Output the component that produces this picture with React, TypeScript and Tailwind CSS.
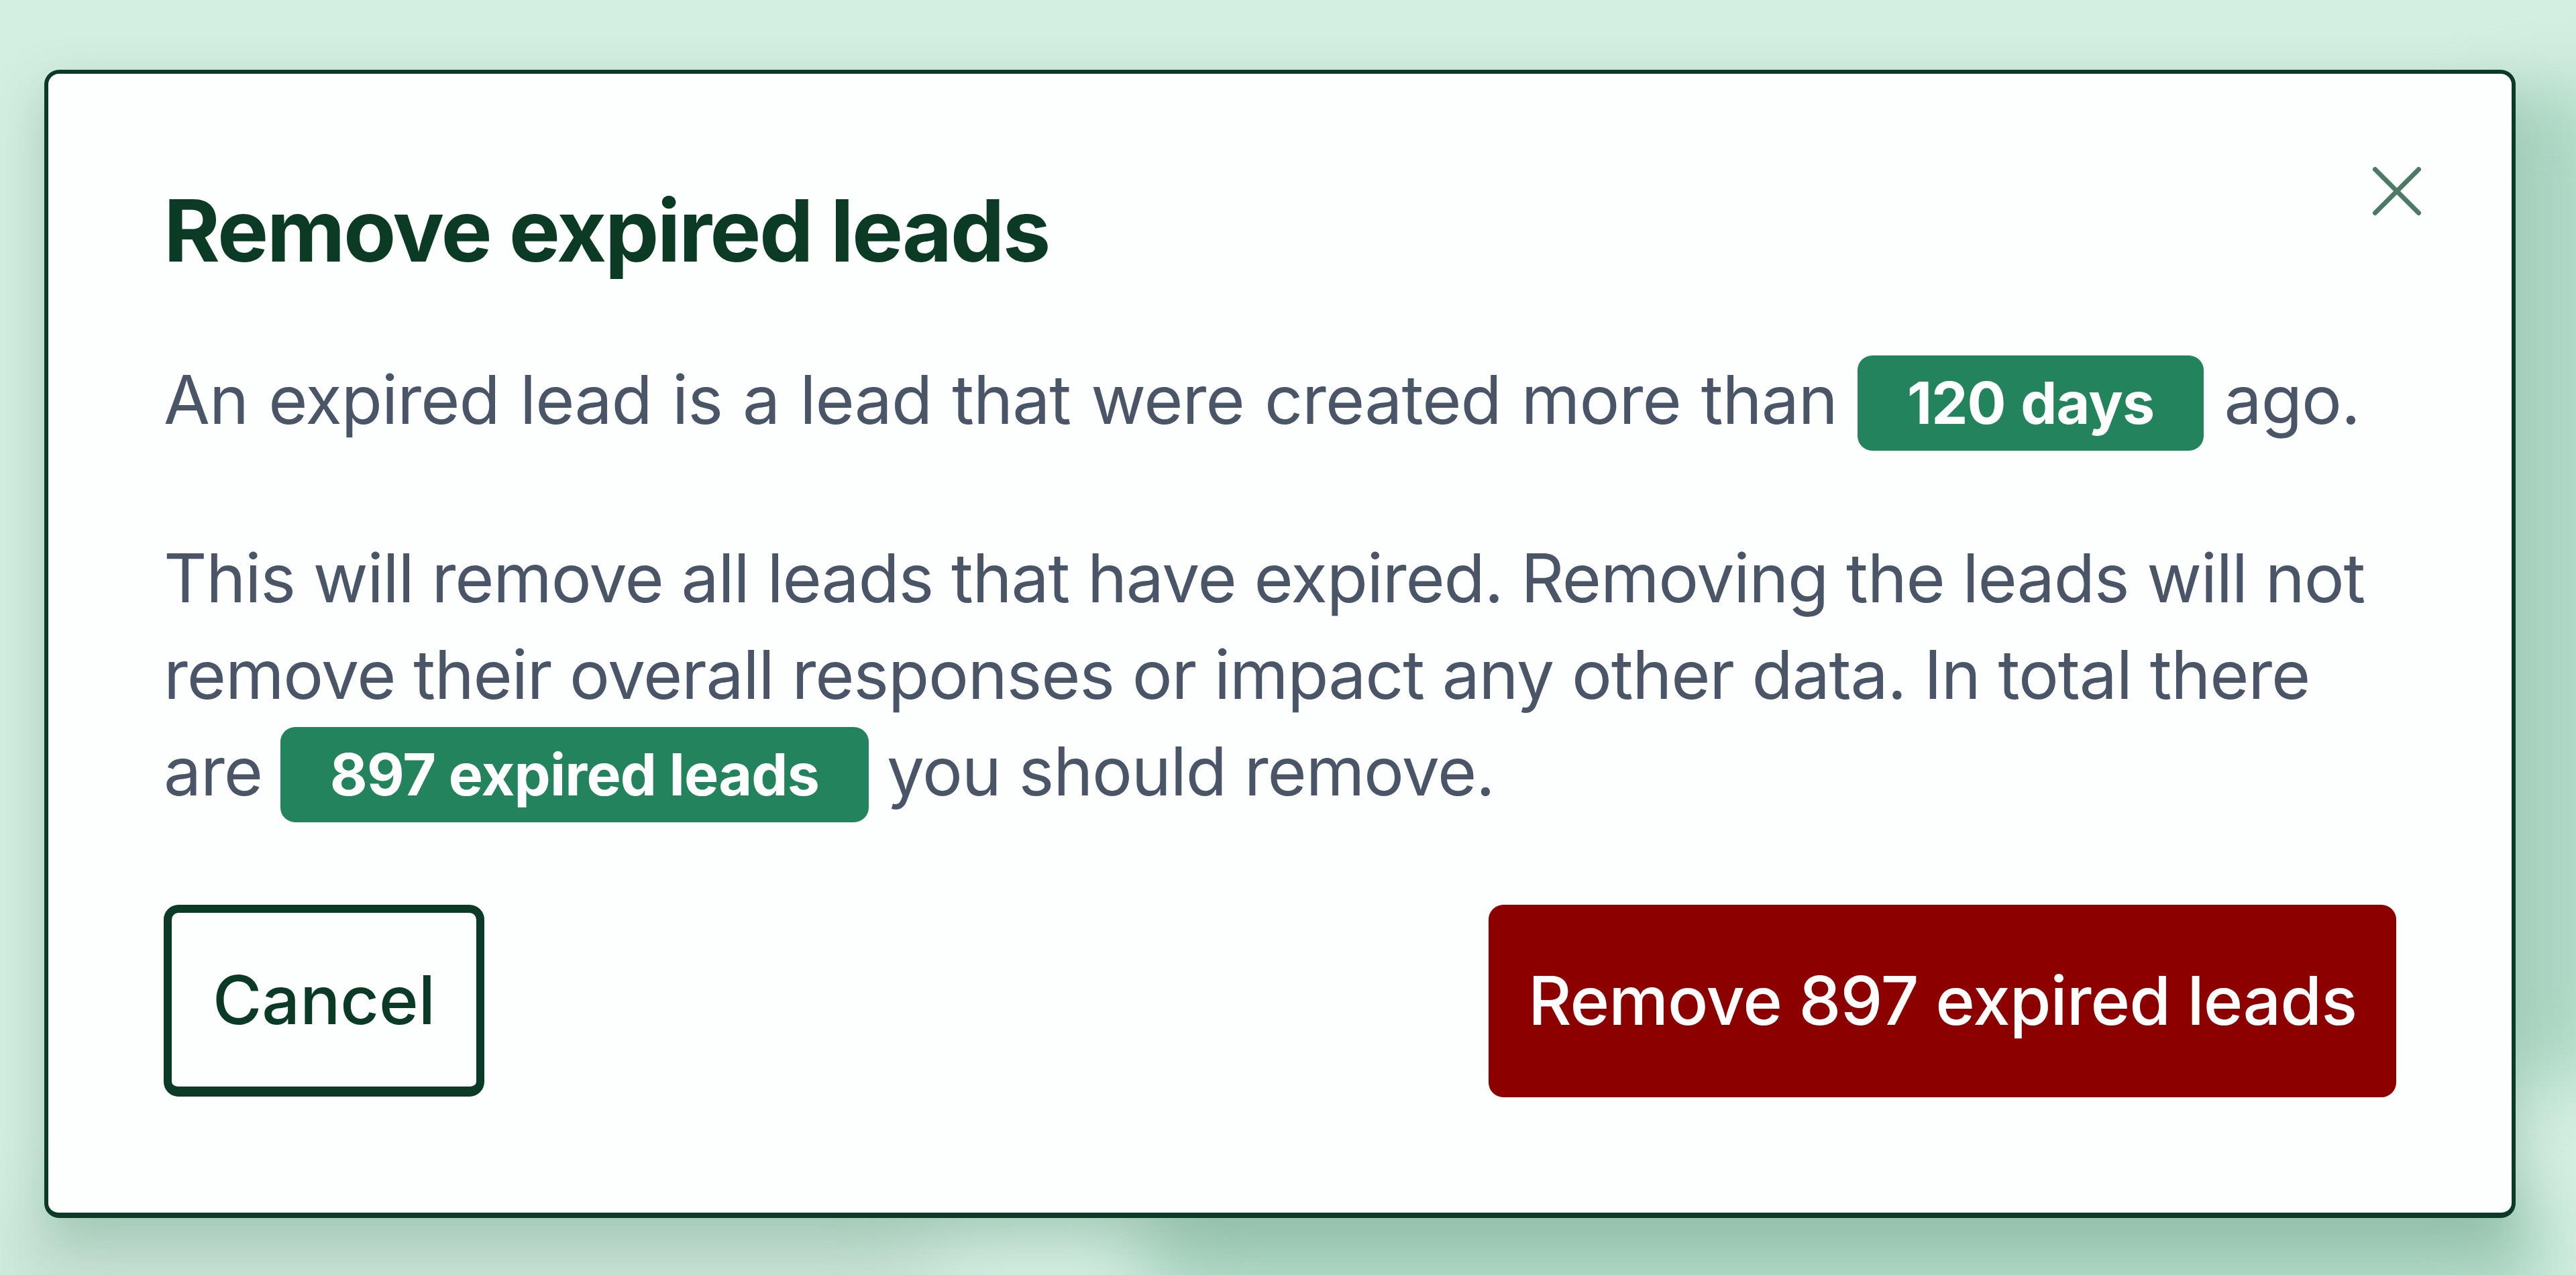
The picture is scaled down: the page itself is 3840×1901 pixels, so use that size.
import { X } from 'lucide-react'

function Pill({ children }: { children: React.ReactNode }) {
  return (
    <span className="inline-block rounded-[22px] bg-[#23835c] px-[74px] text-[86px] leading-[142px] font-bold tracking-[-0.01em] text-white">
      {children}
    </span>
  )
}

export default function App() {
  return (
    <div className="relative flex min-h-screen w-full items-center justify-center overflow-hidden bg-[#d3efe2] pt-[18px] pr-[24px] font-['Inter',sans-serif]">
      {/* blurred page behind the overlay */}
      <div className="absolute right-[-60px] top-[120px] h-[1500px] w-[180px] rounded-full bg-[#acd7c3] blur-[50px]" />
      <div className="absolute bottom-[-50px] left-[1700px] h-[170px] w-[2100px] rounded-full bg-[#aad4c0] blur-[50px]" />
      <div className="absolute bottom-[-50px] left-[0px] h-[150px] w-[1400px] rounded-full bg-[#c4e1d3] blur-[50px]" />

      <div className="relative w-[3684px] rounded-[22px] border-[6px] border-b-[8px] border-[#0b3b26] bg-[#fdfefe] px-[172px] pt-[157px] pb-[172px] shadow-[0_30px_80px_rgba(30,90,60,0.25)]">
        <button className="absolute right-[106px] top-[110px] text-[#4d7a65]">
          <X size={130} strokeWidth={1.3} />
        </button>

        <h2 className="text-[128px] leading-[154px] font-bold tracking-[-0.02em] text-[#0c3b25]">
          Remove expired leads
        </h2>

        <p className="mt-[103px] text-[100px] leading-[144px] tracking-[-0.01em] [word-spacing:3px] text-[#4a5568]">
          An expired lead is a lead that were created more than <Pill>120 days</Pill> ago.
        </p>

        <p className="mt-[118px] text-[100px] leading-[144px] tracking-[-0.012em] text-[#4a5568]">
          This will remove all leads that have expired. Removing the leads will not remove their overall
          responses or impact any other data. In total there are <Pill>897 expired leads</Pill> you should
          remove.
        </p>

        <div className="mt-[123px] flex items-center justify-between">
          <button className="h-[286px] rounded-[22px] border-[12px] border-b-[15px] border-[#0b3b26] px-[61px] text-[100px] font-medium text-[#0b3b26]">
            Cancel
          </button>
          <button className="h-[287px] rounded-[22px] bg-[#8c0000] px-[59px] text-[100px] font-medium tracking-[-0.01em] text-white">
            Remove 897 expired leads
          </button>
        </div>
      </div>
    </div>
  )
}
